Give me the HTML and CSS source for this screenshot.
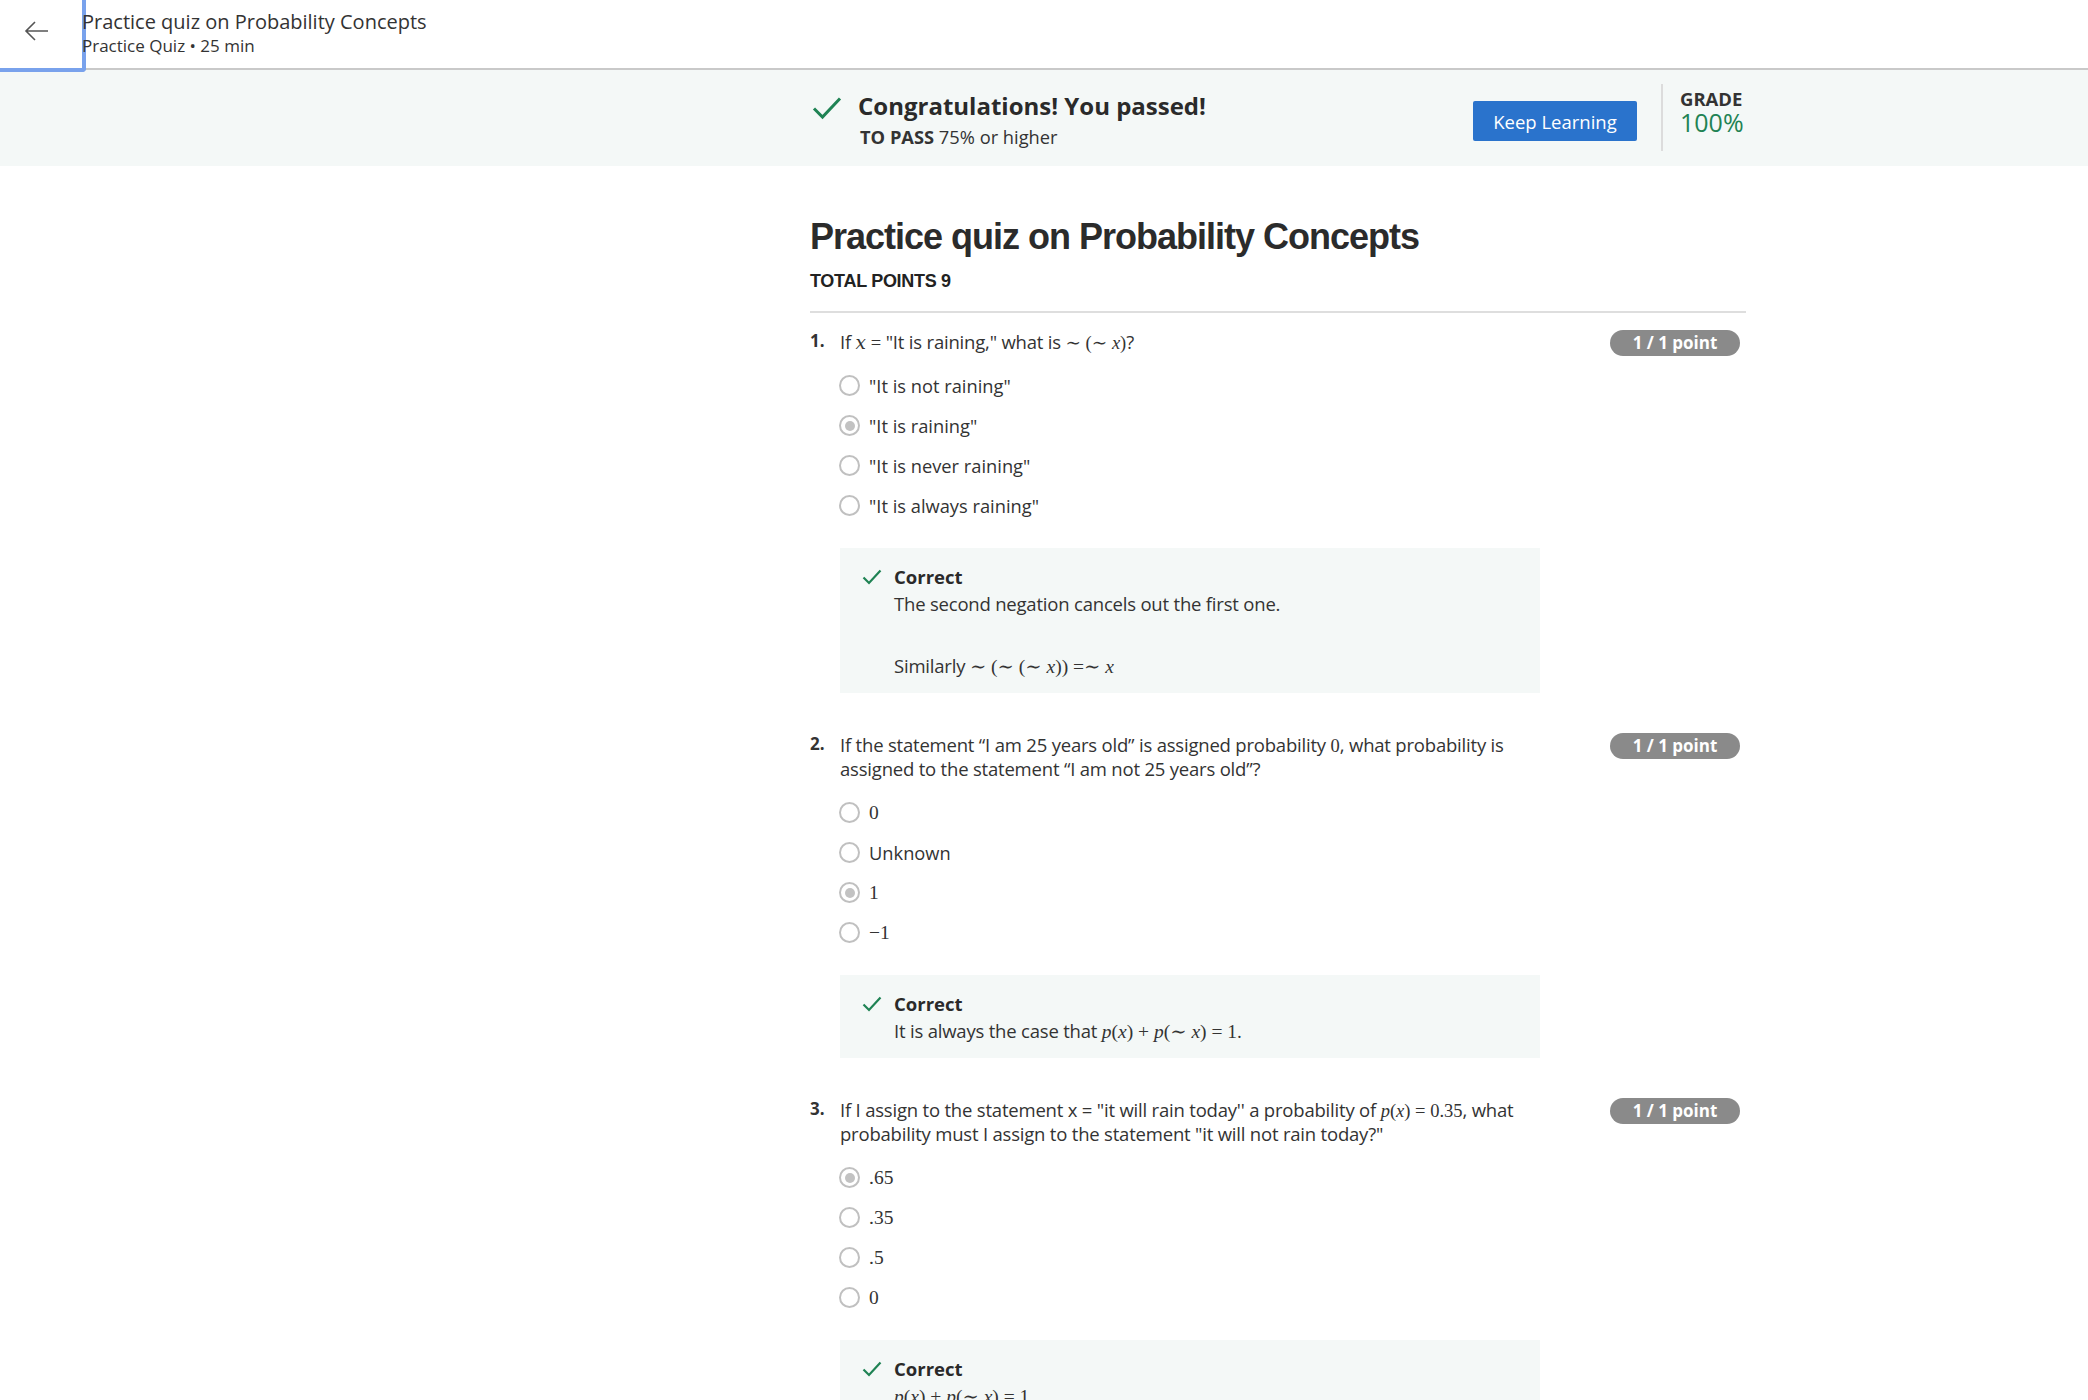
FILE: index.html
```html
<!DOCTYPE html>
<html>
<head>
<meta charset="utf-8">
<link rel="stylesheet" href="styles.css">
</head>
<body>
<header class="topbar">
  <button class="back" aria-label="Back">
    <svg width="26" height="22" viewBox="0 0 26 22"><path d="M24 11H2M11 2L2 11l9 9" fill="none" stroke="#555" stroke-width="1.6"/></svg>
  </button>
  <div class="crumb">
    <div class="crumb-title">Practice quiz on Probability Concepts</div>
    <div class="crumb-sub">Practice Quiz • 25 min</div>
  </div>
</header>

<section class="banner">
  <div class="banner-inner">
    <svg class="pass-check" width="30" height="24" viewBox="0 0 30 24"><path d="M2 12.5L10.5 21L28 2.5" fill="none" stroke="#1f8354" stroke-width="3"/></svg>
    <div class="pass-text">
      <div class="pass-title">Congratulations! You passed!</div>
      <div class="pass-sub"><b>TO PASS</b> 75% or higher</div>
    </div>
    <button class="keep">Keep Learning</button>
    <div class="grade">
      <div class="grade-label">GRADE</div>
      <div class="grade-value">100%</div>
    </div>
  </div>
</section>

<main class="quiz">
  <h1 class="quiz-title">Practice quiz on Probability Concepts</h1>
  <div class="total">TOTAL POINTS 9</div>

  <div class="question">
    <div class="qnum">1.</div>
    <div class="qbody">
      <div class="qtext">If <span class="m">𝑥</span> <span class="ms">=</span> "It is raining," what is <span class="ms">∼ (∼ <i>x</i>)</span>?</div>
      <ul class="options">
        <li><span class="radio"></span><span class="opt">"It is not raining"</span></li>
        <li><span class="radio on"></span><span class="opt">"It is raining"</span></li>
        <li><span class="radio"></span><span class="opt">"It is never raining"</span></li>
        <li><span class="radio"></span><span class="opt">"It is always raining"</span></li>
      </ul>
      <div class="feedback">
        <div class="fb-head"><svg width="20" height="16" viewBox="0 0 20 16"><path d="M1.5 8.5L7 14L18.5 1.5" fill="none" stroke="#1f8354" stroke-width="2.2"/></svg>Correct</div>
        <p class="fb-text gap">The second negation cancels out the first one.</p>
        <p class="fb-text">Similarly <span class="ms">∼ (∼ (∼ <i>x</i>)) =∼ <i>x</i></span></p>
      </div>
    </div>
    <div class="badge">1 / 1 point</div>
  </div>

  <div class="question">
    <div class="qnum">2.</div>
    <div class="qbody">
      <div class="qtext">If the statement “I am 25 years old” is assigned probability <span class="ms">0</span>, what probability is assigned to the statement “I am not 25 years old”?</div>
      <ul class="options">
        <li><span class="radio"></span><span class="opt ms">0</span></li>
        <li><span class="radio"></span><span class="opt">Unknown</span></li>
        <li><span class="radio on"></span><span class="opt ms">1</span></li>
        <li><span class="radio"></span><span class="opt ms">−1</span></li>
      </ul>
      <div class="feedback">
        <div class="fb-head"><svg width="20" height="16" viewBox="0 0 20 16"><path d="M1.5 8.5L7 14L18.5 1.5" fill="none" stroke="#1f8354" stroke-width="2.2"/></svg>Correct</div>
        <p class="fb-text">It is always the case that <span class="ms"><i>p</i>(<i>x</i>) + <i>p</i>(∼ <i>x</i>) = 1</span>.</p>
      </div>
    </div>
    <div class="badge">1 / 1 point</div>
  </div>

  <div class="question">
    <div class="qnum">3.</div>
    <div class="qbody">
      <div class="qtext">If I assign to the statement x = "it will rain today'' a probability of <span class="ms"><i>p</i>(<i>x</i>) = 0.35</span>, what probability must I assign to the statement "it will not rain today?"</div>
      <ul class="options">
        <li><span class="radio on"></span><span class="opt ms">.65</span></li>
        <li><span class="radio"></span><span class="opt ms">.35</span></li>
        <li><span class="radio"></span><span class="opt ms">.5</span></li>
        <li><span class="radio"></span><span class="opt ms">0</span></li>
      </ul>
      <div class="feedback">
        <div class="fb-head"><svg width="20" height="16" viewBox="0 0 20 16"><path d="M1.5 8.5L7 14L18.5 1.5" fill="none" stroke="#1f8354" stroke-width="2.2"/></svg>Correct</div>
        <p class="fb-text"><span class="ms"><i>p</i>(<i>x</i>) + <i>p</i>(∼ <i>x</i>) = 1</span></p>
      </div>
    </div>
    <div class="badge">1 / 1 point</div>
  </div>
</main>
</body>
</html>
```
FILE: styles.css
```css
* { box-sizing: border-box; }
html, body { margin: 0; padding: 0; background: #fff; }
body {
  font-family: "Open Sans", "Noto Sans", sans-serif;
  color: #1f1f1f;
  overflow: hidden;
}

.topbar {
  display: flex;
  align-items: flex-start;
  height: 70px;
  border-bottom: 2px solid #c9c9c9;
  position: relative;
  z-index: 2;
}
.back {
  width: 86px;
  height: 72px;
  flex: none;
  background: #fff;
  border: none;
  border-right: 4px solid #79a2ec;
  border-bottom: 4px solid #79a2ec;
  border-bottom-right-radius: 4px;
  display: flex;
  align-items: center;
  justify-content: center;
  padding: 0 8px 6px 0;
  margin-right: -4px;
}
.crumb { padding-top: 10px; color: #333; }
.crumb-title { font-size: 20px; line-height: 24px; }
.crumb-sub { font-size: 17px; line-height: 24px; }

.banner {
  background: #f4f8f7;
  height: 96px;
}
.banner-inner {
  margin-left: 810px;
  width: 936px;
  display: flex;
  align-items: flex-start;
  padding-top: 21px;
}
.pass-check { margin: 5px 16px 0 2px; flex: none; }
.pass-text { flex: 1; }
.pass-title {
  font-size: 24px;
  line-height: 30px;
  font-weight: 700;
  color: #2a2a2a;
  font-stretch: 92%;
}
.pass-sub {
  font-size: 18.3px;
  line-height: 30px;
  color: #333;
  font-stretch: 94%;
  margin-top: 1px;
  padding-left: 2px;
}
.pass-sub b { font-weight: 700; }
.keep {
  margin-top: 10px;
  width: 164px;
  height: 40px;
  background: #2a73cc;
  color: #fff;
  border: none;
  border-radius: 2px;
  font-family: inherit;
  font-size: 18.5px;
  font-weight: 500;
  font-stretch: 94%;
}
.grade {
  margin-left: 24px;
  margin-top: -7px;
  border-left: 2px solid #dcdcdc;
  height: 67px;
  padding-left: 17px;
  width: 85px;
}
.grade-label {
  margin-top: 4px;
  font-size: 18.5px;
  line-height: 22px;
  font-weight: 700;
  color: #333;
  font-stretch: 94%;
}
.grade-value {
  font-size: 25px;
  line-height: 24px;
  color: #1f8354;
  font-stretch: 92%;
}

.quiz {
  margin-left: 810px;
  width: 936px;
}
.quiz-title {
  margin: 47px 0 0;
  font-family: "Liberation Sans", Arial, sans-serif;
  font-size: 36px;
  line-height: 48px;
  font-weight: 700;
  color: #2b2b2b;
  letter-spacing: -1px;
}
.total {
  font-family: "Liberation Sans", Arial, sans-serif;
  font-size: 18px;
  line-height: 26px;
  font-weight: 700;
  color: #222;
  margin-top: 7px;
  padding-bottom: 17px;
  border-bottom: 2px solid #dedede;
  letter-spacing: -0.3px;
}

.question {
  display: flex;
  align-items: flex-start;
  margin-top: 17px;
}
.question + .question { margin-top: 40px; }
.qnum {
  width: 30px;
  flex: none;
  font-size: 17px;
  line-height: 22px;
  font-weight: 700;
  color: #333;
}
.qbody { width: 700px; flex: none; }
.qtext {
  font-size: 18.5px;
  line-height: 24.5px;
  color: #333;
  font-stretch: 92%;
  letter-spacing: -0.2px;
}
.m, .ms { font-family: "Liberation Serif", "DejaVu Serif", serif; font-stretch: normal; line-height: 1; letter-spacing: 0; }
.ms i { font-style: italic; }
.m { font-style: normal; }

.options {
  list-style: none;
  margin: 11px 0 0;
  padding: 0;
}
.options li {
  height: 40px;
  display: flex;
  align-items: center;
}
.radio {
  width: 21px;
  height: 21px;
  border-radius: 50%;
  border: 2px solid #c0c0c0;
  flex: none;
  margin-right: 9px;
  margin-left: -1px;
  position: relative;
  background: #fff;
}
.radio.on::after {
  content: "";
  position: absolute;
  left: 3.5px;
  top: 3.5px;
  width: 10px;
  height: 10px;
  border-radius: 50%;
  background: #c2c2c2;
}
.opt { font-size: 18.3px; color: #333; }
.opt.ms { font-size: 19.5px; line-height: 1.2; }

.feedback {
  margin-top: 22px;
  background: #f4f8f7;
  padding: 16px 20px 14px 22px;
}
.fb-head {
  display: flex;
  align-items: center;
  font-size: 18.5px;
  line-height: 26px;
  font-weight: 700;
  color: #2a2a2a;
  font-stretch: 94%;
}
.fb-head svg { margin-right: 12px; }
.fb-text {
  margin: 1px 0 0 32px;
  font-size: 18.5px;
  line-height: 26px;
  color: #333;
  font-stretch: 93%;
  letter-spacing: -0.2px;
}
.fb-text.gap { margin-bottom: 36px; }
.fb-text .ms { font-size: 19.5px; }

.badge {
  margin-left: 70px;
  margin-top: 0;
  width: 130px;
  height: 26px;
  border-radius: 13px;
  background: #8a8a8a;
  color: #fff;
  font-size: 17px;
  font-weight: 700;
  line-height: 26px;
  text-align: center;
  flex: none;
}
```
